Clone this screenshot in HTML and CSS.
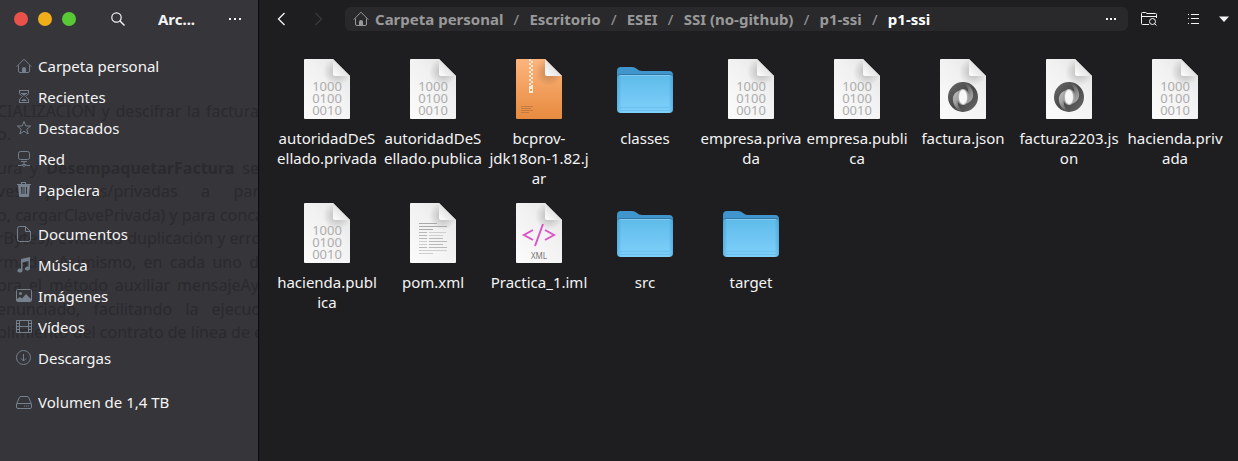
FILE: index.html
```html
<!DOCTYPE html>
<html lang="es">
<head>
<meta charset="utf-8">
<title>Archivos</title>
<link rel="stylesheet" href="styles.css">
</head>
<body>
<svg class="defs" aria-hidden="true">
  <defs>
    <linearGradient id="paper" x1="1" y1="0" x2="0.2" y2="1"><stop offset="0" stop-color="#e2e2e2"/><stop offset="0.45" stop-color="#f1f1f1"/><stop offset="1" stop-color="#fafafa"/></linearGradient>
    <linearGradient id="orange" x1="0" y1="0" x2="0" y2="1"><stop offset="0" stop-color="#fdb47c"/><stop offset="1" stop-color="#e78b3f"/></linearGradient>
    <linearGradient id="fold" x1="0" y1="1" x2="0.6" y2="0.4"><stop offset="0" stop-color="#ffffff"/><stop offset="1" stop-color="#dedede"/></linearGradient>
    <radialGradient id="shade" gradientUnits="userSpaceOnUse" cx="42" cy="15" r="14"><stop offset="0" stop-color="#000" stop-opacity="0.22"/><stop offset="1" stop-color="#000" stop-opacity="0"/></radialGradient>
    <linearGradient id="front" x1="0" y1="0" x2="0" y2="1"><stop offset="0" stop-color="#5fbbea"/><stop offset="1" stop-color="#7fd0fb"/></linearGradient>
    <linearGradient id="side" x1="0" y1="0" x2="1" y2="0"><stop offset="0" stop-color="#1e7fb8" stop-opacity="0.35"/><stop offset="0.08" stop-color="#1e7fb8" stop-opacity="0"/><stop offset="0.92" stop-color="#1e7fb8" stop-opacity="0"/><stop offset="1" stop-color="#1e7fb8" stop-opacity="0.35"/></linearGradient>
    <linearGradient id="ring" x1="0" y1="0" x2="1" y2="1"><stop offset="0" stop-color="#6a6a6a"/><stop offset="0.5" stop-color="#484848"/><stop offset="1" stop-color="#6a6a6a"/></linearGradient>
    <linearGradient id="swirla" x1="0" y1="0" x2="0.6" y2="1"><stop offset="0" stop-color="#c4c4c4"/><stop offset="0.5" stop-color="#a2a2a2"/><stop offset="1" stop-color="#585858"/></linearGradient>
    <linearGradient id="swirlb" x1="0.4" y1="0" x2="1" y2="1"><stop offset="0" stop-color="#565656"/><stop offset="0.6" stop-color="#949494"/><stop offset="1" stop-color="#bcbcbc"/></linearGradient>
    <symbol id="page" viewBox="0 0 64 64">
      <path d="M10 2H38L55 19V61Q55 62 54 62H10Q9 62 9 61V3Q9 2 10 2Z" fill="url(#paper)"/>
      <path d="M22 2H38L55 19V34H22Z" fill="url(#shade)"/>
      <path d="M38 2L55 19H40Q38 19 38 17Z" fill="url(#fold)"/>
    </symbol>
    <symbol id="binary" viewBox="0 0 64 64">
      <use href="#page"/>
      <g class="digits"><text x="32" y="34">1000</text><text x="32" y="46">0100</text><text x="32" y="58">0010</text></g>
    </symbol>
    <symbol id="json" viewBox="0 0 64 64">
      <use href="#page"/>
      <circle cx="32" cy="40" r="15" fill="url(#ring)"/>
      <path d="M32 33C25 33 21 38 22 44C23 50 27 54 33 55C28 52 26 48 27 42C27 37 29 34 32 33Z" fill="url(#swirla)"/>
      <path d="M32 47C39 47 43 42 42 36C41 30 37 26 31 25C36 28 38 32 37 38C37 43 35 46 32 47Z" fill="url(#swirlb)"/>
      <ellipse cx="32" cy="40" rx="6" ry="8" fill="#a4a4a4"/>
      <path d="M32 32C27 33 25 43 32 48C38 47 38 35 32 32Z" fill="#c8c8c8"/>
      <ellipse cx="32" cy="40" rx="4" ry="7" fill="#f8f8f8"/>
    </symbol>
    <symbol id="jar" viewBox="0 0 64 64">
      <path d="M10 2H38L55 19V61Q55 62 54 62H10Q9 62 9 61V3Q9 2 10 2Z" fill="url(#orange)"/>
      <path d="M26 2H38L55 19V32H26Z" fill="url(#shade)"/>
      <path d="M38 2L55 19H40Q38 19 38 17Z" fill="url(#fold)"/>
      <path d="M23 2V29" stroke="#fbe9da" stroke-width="2" stroke-dasharray="2 2"/>
      <path d="M25 4V29" stroke="#fbe9da" stroke-width="2" stroke-dasharray="2 2"/>
      <path fill-rule="evenodd" d="M22 29H26V36H22ZM23 32V34H25V32Z" fill="#fbe9da"/>
      <path d="M14 49.500H26M14 51.500H24M14 53.500H26M14 55.500H22" stroke="#c47b41"/>
    </symbol>
    <symbol id="textfile" viewBox="0 0 64 64">
      <use href="#page"/>
      <path d="M18 22.500H36M18 25.500H46M18 28.500H32" stroke="#a9a9a9"/>
      <path d="M18 31.500H26M18 34.500H26M18 37.500H26M28 37.500H42M28 40.500H46M28 43.500H42M18 46.500H26M28 46.500H46" stroke="#b8b8b8"/>
      <path d="M28 31.500H45M28 34.500H42M18 40.500H26M18 43.500H26M18 49.500H46M18 52.500H32" stroke="#cfcfcf"/>
    </symbol>
    <symbol id="xml" viewBox="0 0 64 64">
      <use href="#page"/>
      <path d="M26 29L17 34L26 39M38 29L47 34L38 39M36 23L28 45" fill="none" stroke="#d856c8" stroke-width="2"/>
      <text class="kind" x="32" y="58">XML</text>
    </symbol>
    <symbol id="folder" viewBox="0 0 64 64">
      <path d="M8 10H19Q22 10 24 12T29 14H56Q60 14 60 18V40H4V14Q4 10 8 10Z" fill="#4095cd"/>
      <path d="M4 23V20Q4 17 7 17H57Q60 17 60 20V23Z" fill="#3479a5"/>
      <path d="M7 18H57Q60 18 60 21V52Q60 56 56 56H8Q4 56 4 52V21Q4 18 7 18Z" fill="url(#front)"/>
      <path d="M7 18H57Q60 18 60 21V52Q60 56 56 56H8Q4 56 4 52V21Q4 18 7 18Z" fill="url(#side)"/>
      <path d="M5 50.500H59M5 53.500H59" stroke="#6cc0ec"/>
      <path d="M7 18.500H57" stroke="#80cbef"/>
    </symbol>
    <symbol id="home" viewBox="0 0 16 16"><path d="M.7 8.600L8 1.200L15.300 8.600M2.500 7.500V13Q2.500 14.500 4 14.500H12Q13.500 14.500 13.500 13V7.500" fill="none" stroke="currentColor"/><path d="M6 15V11Q6 9 8 9T10 11V15Z" fill="currentColor"/></symbol>
  </defs>
</svg>

<div class="window">
  <aside class="sidebar">
    <div class="ghost" aria-hidden="true">
      <p>CIALIZACION y descifrar la factura</p>
      <p class="end">o.</p>
      <p class="para">ura y <b>DesempaquetarFactura</b> se</p>
      <p>ves públicas/privadas a par</p>
      <p>o, cargarClavePrivada) y para conca</p>
      <p>rBytes), evitando duplicación y erro</p>
      <p>rmado. Asimismo, en cada uno d</p>
      <p>ora el método auxiliar mensajeAy</p>
      <p>enunciado, facilitando la ejecuc</p>
      <p>plimiento del contrato de línea de e</p>
    </div>
    <header class="side-head">
      <div class="lights">
        <button class="light red" aria-label="Cerrar"></button>
        <button class="light amber" aria-label="Minimizar"></button>
        <button class="light green" aria-label="Maximizar"></button>
      </div>
      <button class="tool" aria-label="Buscar"><svg class="icon" viewBox="0 0 16 16"><circle cx="6.500" cy="6.500" r="4.700" fill="none" stroke="currentColor" stroke-width="1.200"/><path d="M10 10L14.500 14.500" stroke="currentColor" stroke-width="1.400"/></svg></button>
      <h1 class="title">Arc...</h1>
      <button class="tool" aria-label="Menú"><svg class="icon" viewBox="0 0 16 16"><path d="M2 7h2v2H2zM7 7h2v2H7zM12 7h2v2h-2z" fill="currentColor"/></svg></button>
    </header>
    <nav class="places" aria-label="Lugares">
      <ul>
        <li><a href="#"><svg class="icon" viewBox="0 0 16 16"><use href="#home"/></svg>Carpeta personal</a></li>
        <li><a href="#"><svg class="icon" viewBox="0 0 16 16"><path d="M3 1.500H13M3 13.500H13M3.500 1.500V4Q3.500 5.500 5.500 6.500T5.500 8.500Q3.500 9.500 3.500 11V13.500M12.500 1.500V4Q12.500 5.500 10.500 6.500T10.500 8.500Q12.500 9.500 12.500 11V13.500M5 4.500H11" fill="none" stroke="currentColor"/><path d="M6 5h4L8 7zM5 12Q8 8 11 12Z" fill="currentColor"/></svg>Recientes</a></li>
        <li><a href="#"><svg class="icon" viewBox="0 0 16 16"><path d="M8 1.500L9.800 6H14.700L10.800 9.200L12.200 14L8 11.200L3.800 14L5.200 9.200L1.300 6H6.200Z" fill="none" stroke="currentColor" stroke-linejoin="round"/></svg>Destacados</a></li>
        <li><a href="#"><svg class="icon" viewBox="0 0 16 16"><rect x="2.500" y=".5" width="11" height="8" rx="2" fill="none" stroke="currentColor"/><path d="M5 10.500H11M8 10V13M2 14.500H5L6.500 13.500H9.500L11 14.500H14M6 14L8 15.500L10 14" fill="none" stroke="currentColor"/></svg>Red</a></li>
        <li><a href="#"><svg class="icon" viewBox="0 0 16 16"><path fill-rule="evenodd" d="M1 2H5V0H10V2H15V3H14L13 14Q13 15 12 15H4Q3 15 3 14L2 3H1ZM6 1V2H9V1ZM5 5L5.500 12H6.500V5ZM7.500 5V12H8.500V5ZM10 5V12H11V5Z" fill="currentColor"/></svg>Papelera</a></li>
      </ul>
      <ul>
        <li><a href="#"><svg class="icon" viewBox="0 0 16 16"><path d="M3.500 .5H9.500L14.500 5.500V13.500Q14.500 15.500 12.500 15.500H3.500Q1.500 15.500 1.500 13.500V2.500Q1.500 .5 3.500 .5ZM9.500 .5V5.500H14.500" fill="none" stroke="currentColor"/></svg>Documentos</a></li>
        <li><a href="#"><svg class="icon" viewBox="0 0 16 16"><path d="M5 2L14 0V11.500A2.500 2 0 1 1 12.500 9.700V4L6.500 5.500V13.500A2.500 2 0 1 1 5 11.700Z" fill="currentColor"/></svg>Música</a></li>
        <li><a href="#"><svg class="icon" viewBox="0 0 16 16"><rect x=".5" y="1.500" width="15" height="12" rx="1" fill="none" stroke="currentColor"/><circle cx="4.500" cy="5.500" r="1.500" fill="currentColor"/><path d="M1 13V11L4 9L6 10.500L10 6L15 11V13Z" fill="currentColor"/></svg>Imágenes</a></li>
        <li><a href="#"><svg class="icon" viewBox="0 0 16 16"><path d="M.5 1.500H15.500V13.500H.5ZM3.500 1.500V13.500M12.500 1.500V13.500M3.500 7.500H12.500M.5 4.500H3.500M.5 7.500H3.500M.5 10.500H3.500M12.500 4.500H15.500M12.500 7.500H15.500M12.500 10.500H15.500" fill="none" stroke="currentColor"/></svg>Vídeos</a></li>
        <li><a href="#"><svg class="icon" viewBox="0 0 16 16"><circle cx="7.500" cy="7.500" r="7" fill="none" stroke="currentColor"/><path d="M7.500 4V11M5 8.500L7.500 11L10 8.500" fill="none" stroke="currentColor"/></svg>Descargas</a></li>
      </ul>
      <ul>
        <li><a href="#"><svg class="icon" viewBox="0 0 16 16"><path d="M.5 10.500L3 4Q3.500 2.500 5 2.500H11Q12.500 2.500 13 4L15.500 10.500M2 9.500H14Q15.500 9.500 15.500 11V13Q15.500 14.500 14 14.500H2Q.5 14.500 .5 13V11Q.5 9.500 2 9.500Z" fill="none" stroke="currentColor"/><path d="M8 12h1M10 12h1M12 12h1" stroke="currentColor"/></svg>Volumen de 1,4 TB</a></li>
      </ul>
    </nav>
  </aside>

  <main class="main">
    <header class="bar">
      <button class="tool" aria-label="Atrás"><svg class="icon" viewBox="0 0 16 16"><path d="M10.500 2L4.500 8L10.500 14" fill="none" stroke="currentColor" stroke-width="1.300"/></svg></button>
      <button class="tool" aria-label="Adelante" disabled><svg class="icon" viewBox="0 0 16 16"><path d="M5.500 2L11.500 8L5.500 14" fill="none" stroke="currentColor" stroke-width="1.300"/></svg></button>
      <nav class="path" aria-label="Ruta">
        <ol>
          <li><a href="#"><svg class="icon" viewBox="0 0 16 16"><use href="#home"/></svg>Carpeta personal</a></li>
          <li><a href="#">Escritorio</a></li>
          <li><a href="#">ESEI</a></li>
          <li><a href="#">SSI (no-github)</a></li>
          <li><a href="#">p1-ssi</a></li>
          <li><a href="#" aria-current="page">p1-ssi</a></li>
        </ol>
        <button class="tool" aria-label="Opciones de la carpeta"><svg class="icon" viewBox="0 0 16 16"><path d="M2 7h2v2H2zM6 7h2v2H6zM10 7h2v2h-2z" fill="currentColor"/></svg></button>
      </nav>
      <button class="tool" aria-label="Buscar en la carpeta"><svg class="icon" viewBox="0 0 16 16"><path d="M8 13.500H1.500Q.5 13.500 .5 12.500V2.500Q.5 1.500 1.500 1.500H4.500L6 2.500H14.500Q15.500 2.500 15.500 3.500V7M.5 5.500H15.500" fill="none" stroke="currentColor"/><circle cx="11.500" cy="10.500" r="3" fill="none" stroke="currentColor"/><path d="M13.500 12.500L15.500 14.500" stroke="currentColor"/></svg></button>
      <div class="view">
        <button class="tool" aria-label="Vista de lista"><svg class="icon" viewBox="0 0 16 16"><path d="M2 3.500H3M2 7.500H3M2 12.500H3M5 3.500H13M5 7.500H13M5 12.500H13" stroke="currentColor"/></svg></button>
        <button class="tool" aria-label="Opciones de vista"><svg class="icon" viewBox="0 0 16 16"><path d="M3 5.500H13L8 11Z" fill="currentColor"/></svg></button>
      </div>
    </header>
    <ul class="files">
      <li><button class="file"><svg viewBox="0 0 64 64"><use href="#binary"/></svg><span>autoridadDeS<br>ellado.privada</span></button></li>
      <li><button class="file"><svg viewBox="0 0 64 64"><use href="#binary"/></svg><span>autoridadDeS<br>ellado.publica</span></button></li>
      <li><button class="file"><svg viewBox="0 0 64 64"><use href="#jar"/></svg><span>bcprov-<br>jdk18on-1.82.j<br>ar</span></button></li>
      <li><button class="file"><svg viewBox="0 0 64 64"><use href="#folder"/></svg><span>classes</span></button></li>
      <li><button class="file"><svg viewBox="0 0 64 64"><use href="#binary"/></svg><span>empresa.priva<br>da</span></button></li>
      <li><button class="file"><svg viewBox="0 0 64 64"><use href="#binary"/></svg><span>empresa.publi<br>ca</span></button></li>
      <li><button class="file"><svg viewBox="0 0 64 64"><use href="#json"/></svg><span>factura.json</span></button></li>
      <li><button class="file"><svg viewBox="0 0 64 64"><use href="#json"/></svg><span>factura2203.js<br>on</span></button></li>
      <li><button class="file"><svg viewBox="0 0 64 64"><use href="#binary"/></svg><span>hacienda.priv<br>ada</span></button></li>
      <li><button class="file"><svg viewBox="0 0 64 64"><use href="#binary"/></svg><span>hacienda.publ<br>ica</span></button></li>
      <li><button class="file"><svg viewBox="0 0 64 64"><use href="#textfile"/></svg><span>pom.xml</span></button></li>
      <li><button class="file"><svg viewBox="0 0 64 64"><use href="#xml"/></svg><span>Practica_1.iml</span></button></li>
      <li><button class="file"><svg viewBox="0 0 64 64"><use href="#folder"/></svg><span>src</span></button></li>
      <li><button class="file"><svg viewBox="0 0 64 64"><use href="#folder"/></svg><span>target</span></button></li>
    </ul>
  </main>
</div>
</body>
</html>
```

FILE: styles.css
```css
* { box-sizing: border-box; }
body {
  margin: 0;
  background: #1e1e20;
  color: #f4f4f4;
  font: 15px/20px "Noto Sans", sans-serif;
}
ul, ol { list-style: none; margin: 0; padding: 0; }
a { color: inherit; text-decoration: none; }
button { font: inherit; color: inherit; background: none; border: 0; padding: 0; }
.defs { position: absolute; width: 0; height: 0; }
.icon { display: block; width: 16px; height: 16px; flex: none; }
.tool { display: grid; place-items: center; width: 24px; height: 24px; flex: none; }
.tool:disabled { color: #3a3a3c; }

.window { display: flex; min-height: 100vh; }

.sidebar {
  position: relative;
  width: 259px;
  flex: none;
  overflow: hidden;
  background: #36353a;
  border-right: 1px solid #0c0b12;
}
.ghost {
  position: absolute;
  top: 100px;
  left: -3px;
  right: -1px;
  color: #2b2a2e;
  font-size: 16px;
  line-height: 23px;
}
.ghost p { margin: 0; white-space: nowrap; text-align-last: justify; }
.ghost p:nth-child(even) { margin-bottom: 1px; }
.ghost .end { text-align-last: left; }
.ghost .para { margin-top: 11px; }

.side-head {
  position: relative;
  display: flex;
  align-items: center;
  height: 38px;
  padding: 0 11px 0 14px;
}
.lights { display: flex; gap: 10px; margin-right: 30px; }
.light { width: 14px; height: 14px; border-radius: 50%; }
.red { background: #e9524a; }
.amber { background: #f1ae1b; }
.green { background: #59c837; }
.title { flex: 1; margin: 0; text-align: center; font-size: 15px; }

.places { position: relative; padding: 12px 0; }
.places ul + ul { margin-top: 13px; }
.places a { display: flex; align-items: center; gap: 6px; height: 31px; padding-left: 16px; }
.places .icon { color: #74808d; }

.main { flex: 1; min-width: 0; }
.bar { display: flex; align-items: center; height: 38px; padding: 0 2px 0 11px; }
.bar > .tool + .tool { margin-left: 12px; }
.path {
  display: flex;
  flex: 1;
  align-items: center;
  justify-content: space-between;
  min-width: 0;
  height: 24px;
  margin: 0 9px 0 15px;
  padding: 0 4px 0 8px;
  border-radius: 6px;
  background: #29292b;
}
.path ol { display: flex; color: #99999a; font-weight: 700; }
.path li, .path a { display: flex; align-items: center; }
.path a { gap: 6px; }
.path li + li::before { content: "/"; width: 26px; text-align: center; font-weight: 400; }
.path [aria-current] { color: #fff; }
.view { display: flex; gap: 6px; margin-left: 21px; }

.files {
  display: grid;
  grid-template-columns: repeat(auto-fill, 100px);
  gap: 13px 6px;
  padding: 19px 6px 19px 18px;
}
.file { display: flex; flex-direction: column; align-items: center; gap: 7px; width: 100%; }
.file svg { width: 64px; height: 64px; }
.file span { white-space: nowrap; text-align: center; }
.digits { fill: #adadad; font-size: 13px; text-anchor: middle; }
.kind { fill: #777; font-size: 8px; text-anchor: middle; }
```
